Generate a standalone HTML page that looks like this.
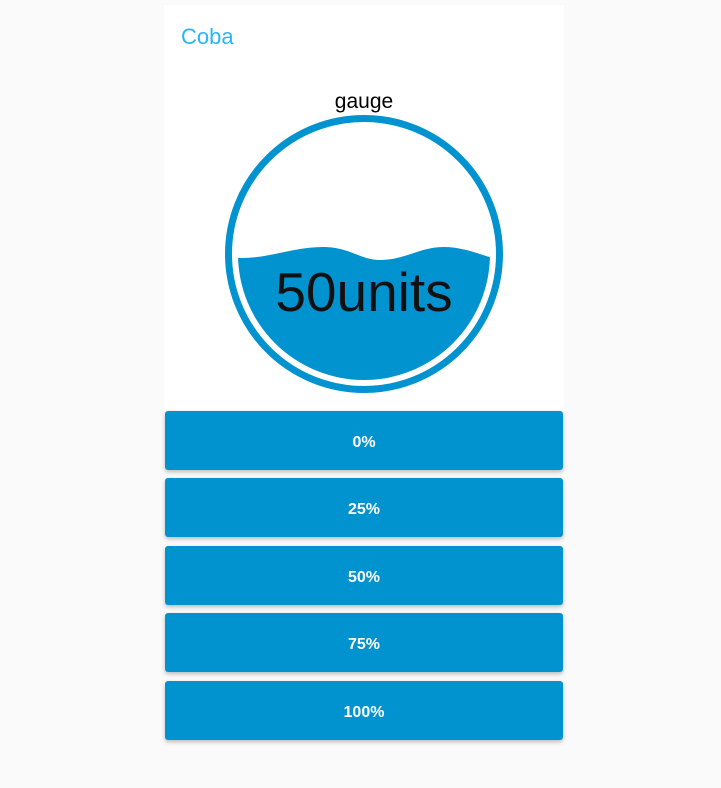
<!DOCTYPE html>
<html><head><style>
body{margin:0;background:#fafafa;font-family:"Liberation Sans",sans-serif;}
.card{position:absolute;left:164px;top:5px;width:400px;height:405px;background:#fff;}
.title{position:absolute;left:181px;top:24px;font-size:22px;color:#29b6f6;}
.btn{position:absolute;left:165px;width:398px;height:59px;background:#0093cf;border-radius:3px;box-shadow:0 2px 4px rgba(0,0,0,.25);color:#fff;font-weight:bold;font-size:16px;line-height:63px;text-align:center;}
</style></head><body>
<div class="card"></div>
<div class="title">Coba</div>
<svg style="position:absolute;left:0;top:0" width="721" height="420">
<defs><clipPath id="c"><circle cx="364" cy="254" r="126"/></clipPath></defs>
<text x="364" y="108" font-size="21" text-anchor="middle" fill="#000" font-family="Liberation Sans">gauge</text>
<circle cx="364" cy="254" r="135.5" fill="none" stroke="#0093cf" stroke-width="7"/>
<path clip-path="url(#c)" fill="#0093cf" d="M230 257 C260 262 290 247 323 247 C350 247 360 260 380 260 C405 260 420 247 443 247 C465 247 480 255 500 260 L500 400 L230 400 Z"/>
<text x="364" y="311" font-size="55" text-anchor="middle" fill="#111" font-family="Liberation Sans">50units</text>
</svg>
<div class="btn" style="top:411px">0%</div>
<div class="btn" style="top:478px">25%</div>
<div class="btn" style="top:546px">50%</div>
<div class="btn" style="top:613px">75%</div>
<div class="btn" style="top:681px">100%</div>
</body></html>
